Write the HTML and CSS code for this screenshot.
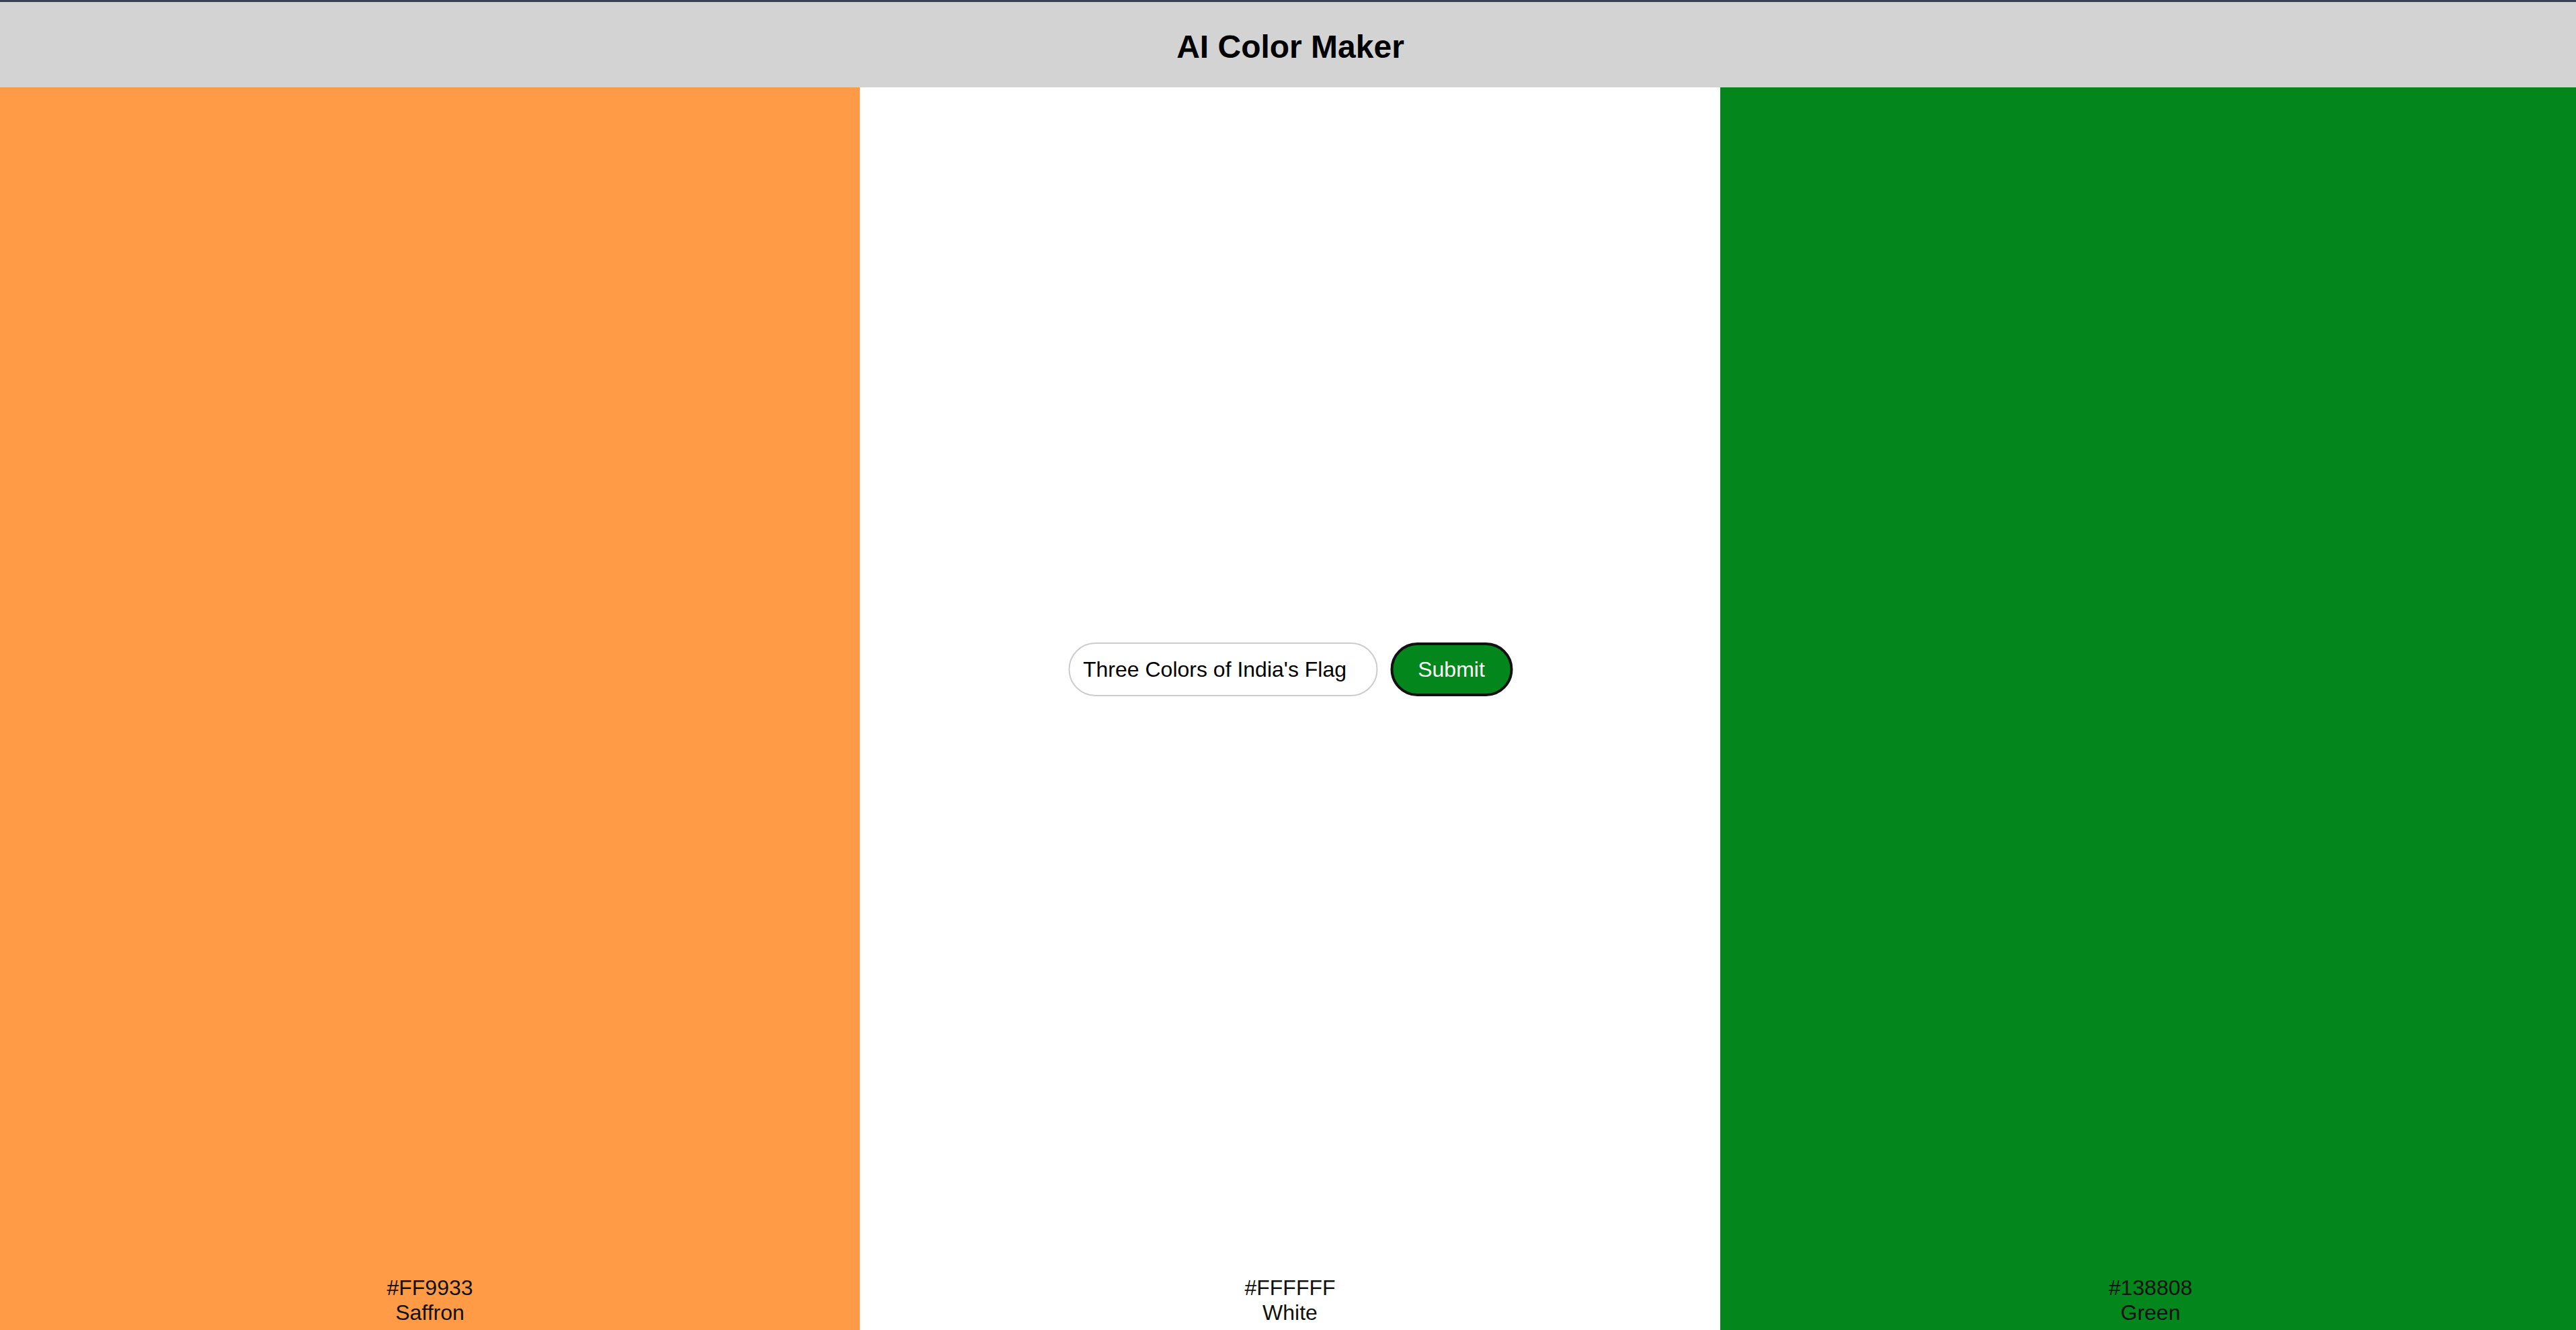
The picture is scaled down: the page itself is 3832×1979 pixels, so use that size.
FILE: index.html
```html
<!DOCTYPE html>
<html lang="en">
<head>
<meta charset="utf-8">
<title>AI Color Maker</title>
<link rel="stylesheet" href="styles.css">
</head>
<body>
<div class="app">
  <header class="header">
    <h1 class="title">AI Color Maker</h1>
  </header>
  <main class="palette">
    <div class="swatch swatch-saffron">
      <div class="label">#FF9933<br>Saffron</div>
    </div>
    <div class="swatch swatch-white">
      <div class="label">#FFFFFF<br>White</div>
    </div>
    <div class="swatch swatch-green">
      <div class="label">#138808<br>Green</div>
    </div>
  </main>
  <form class="prompt-form" onsubmit="return false;">
    <input class="prompt-input" type="text" value="Three Colors of India's Flag">
    <button class="submit-btn" type="submit">Submit</button>
  </form>
</div>
</body>
</html>
```
FILE: styles.css
```css
* { box-sizing: border-box; }

html, body {
  margin: 0;
  padding: 0;
  height: 100%;
  overflow: hidden;
}

body {
  font-family: "Liberation Sans", Arial, sans-serif;
  color: #000;
}

.app {
  position: relative;
  display: flex;
  flex-direction: column;
  width: 3839px;
  height: 100vh;
}

.header {
  background: #d3d3d3;
  border-top: 3px solid #3b4152;
  padding: 39px 0 33px;
  text-align: center;
  flex: 0 0 auto;
}

.title {
  margin: 0;
  font-size: 48px;
  font-weight: bold;
  line-height: normal;
}

.palette {
  flex: 1 1 auto;
  display: grid;
  grid-template-columns: 1279px 1280px 1280px;
}

.swatch {
  display: flex;
  align-items: flex-end;
  justify-content: center;
  padding-bottom: 7px;
}

.swatch-saffron { background: #ff9a46; }
.swatch-white { background: #ffffff; }
.swatch-green { background: #03861b; }

.label {
  font-size: 32px;
  line-height: normal;
  text-align: center;
  color: #111;
}

.prompt-form {
  position: absolute;
  left: 50%;
  top: 956px;
  transform: translateX(-50%);
  display: flex;
  gap: 19px;
  align-items: center;
}

.prompt-input {
  width: 460px;
  height: 80px;
  border: 2px solid #cccccc;
  border-radius: 40px;
  padding: 0 20px;
  font-family: "Liberation Sans", Arial, sans-serif;
  font-size: 32px;
  color: #000;
  background: #fff;
  outline: none;
}

.submit-btn {
  width: 182px;
  height: 80px;
  border: 4px solid #111;
  border-radius: 40px;
  background: #03861b;
  color: #fff;
  font-family: "Liberation Sans", Arial, sans-serif;
  font-size: 32px;
  padding: 0;
  cursor: pointer;
}
```
